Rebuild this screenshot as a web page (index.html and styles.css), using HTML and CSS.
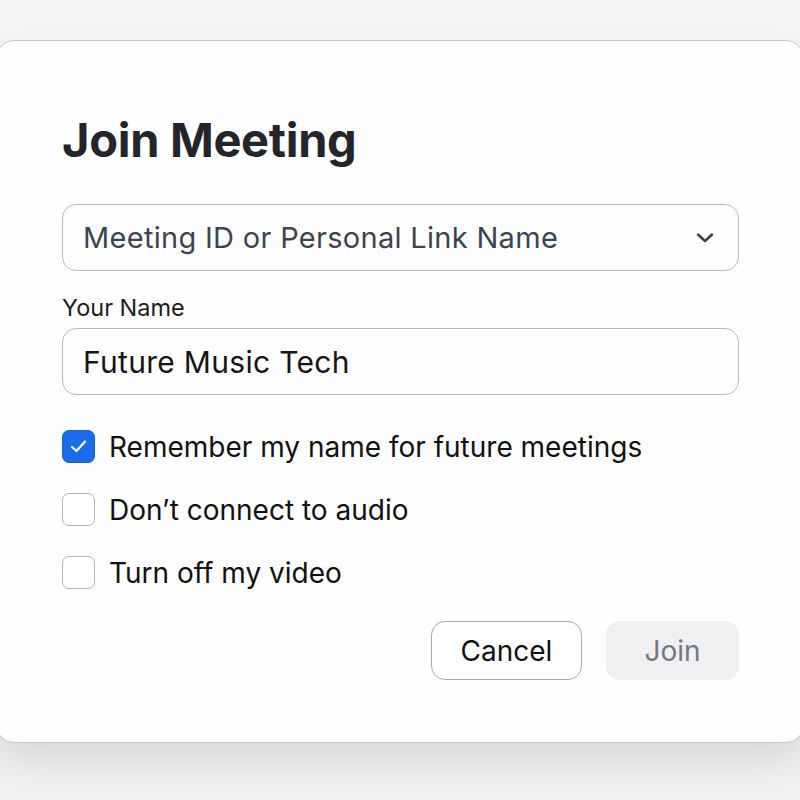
FILE: index.html
```html
<!DOCTYPE html>
<html lang="en">
<head>
    <meta charset="UTF-8">
    <title>Join Meeting</title>
    <link rel="stylesheet" href="styles.css">
</head>
<body>

    <div class="dialog">
        <h1 class="title">Join Meeting</h1>

        <div class="field select-field">
            <span class="placeholder">Meeting ID or Personal Link Name</span>
            <svg class="chevron" width="18" height="10" viewBox="0 0 18 10">
                <path d="M2 1.5 L9 8 L16 1.5" fill="none" stroke="#3a3f4a" stroke-width="2.4" stroke-linecap="round" stroke-linejoin="round"/>
            </svg>
        </div>

        <label class="label">Your Name</label>
        <div class="field">
            <span class="value">Future Music Tech</span>
        </div>

        <div class="options">
            <div class="option">
                <span class="box checked">
                    <svg width="31" height="31" viewBox="0 0 31 31">
                        <path d="M9 16 L13.5 20 L22 10.5" fill="none" stroke="#fff" stroke-width="2.2" stroke-linecap="round" stroke-linejoin="round"/>
                    </svg>
                </span>
                <span class="option-text">Remember my name for future meetings</span>
            </div>
            <div class="option">
                <span class="box"></span>
                <span class="option-text">Don’t connect to audio</span>
            </div>
            <div class="option">
                <span class="box"></span>
                <span class="option-text">Turn off my video</span>
            </div>
        </div>

        <div class="actions">
            <button class="btn cancel-btn">Cancel</button>
            <button class="btn join-btn">Join</button>
        </div>
    </div>

</body>
</html>
```

FILE: styles.css
```css
body {
    margin: 0;
    background: linear-gradient(#f5f5f5, #f1f1f1);
    height: 800px;
    font-family: 'Inter', 'Noto Sans', sans-serif;
    overflow: hidden;
}
.dialog {
    width: 808px;
    box-sizing: border-box;
    margin: 40px 0 0 -4px;
    padding: 71px 0 0 65px;
    height: 703px;
    background: #fefefe;
    border: 1px solid #c6c6cc;
    border-radius: 18px;
    box-shadow: 0 18px 40px rgba(0, 0, 0, 0.11);
}
.title {
    margin: 0;
    font-size: 47px;
    line-height: 56px;
    font-weight: 700;
    color: #23252b;
    letter-spacing: -0.3px;
}
/* Inputs */
.field {
    width: 677px;
    height: 67px;
    box-sizing: border-box;
    border: 1.5px solid #b9b9c0;
    border-radius: 14px;
    display: flex;
    align-items: center;
    padding: 0 20px;
}
.select-field {
    margin-top: 36px;
    justify-content: space-between;
}
.placeholder {
    font-size: 29px;
    letter-spacing: 0.3px;
    color: #3d4350;
}
.chevron {
    margin-right: 4px;
}
.label {
    display: block;
    margin-top: 23px;
    margin-bottom: 6px;
    font-size: 23.5px;
    line-height: 28px;
    color: #1c1c1e;
}
.value {
    font-size: 30px;
    letter-spacing: 0.3px;
    color: #151515;
}
/* Checkboxes */
.options {
    margin-top: 35px;
    display: flex;
    flex-direction: column;
    gap: 30px;
}
.option {
    display: flex;
    align-items: center;
    gap: 14px;
    height: 33px;
}
.box {
    width: 33px;
    height: 33px;
    box-sizing: border-box;
    border: 1.5px solid #b3b3b9;
    border-radius: 7px;
    display: flex;
    align-items: center;
    justify-content: center;
    background: #fff;
}
.box.checked {
    background: #1a6ce8;
    border: 1px solid #1560d4;
}
.option-text {
    font-size: 28px;
    color: #111;
}
/* Buttons */
.actions {
    width: 677px;
    margin-top: 32px;
    display: flex;
    justify-content: flex-end;
    gap: 24px;
}
.btn {
    height: 59px;
    box-sizing: border-box;
    border-radius: 14px;
    font-family: inherit;
    font-size: 28px;
}
.cancel-btn {
    width: 151px;
    background: #fff;
    border: 1.5px solid #a9a9b1;
    color: #111;
}
.join-btn {
    width: 133px;
    background: #f0f0f3;
    border: none;
    color: #737883;
}
```
